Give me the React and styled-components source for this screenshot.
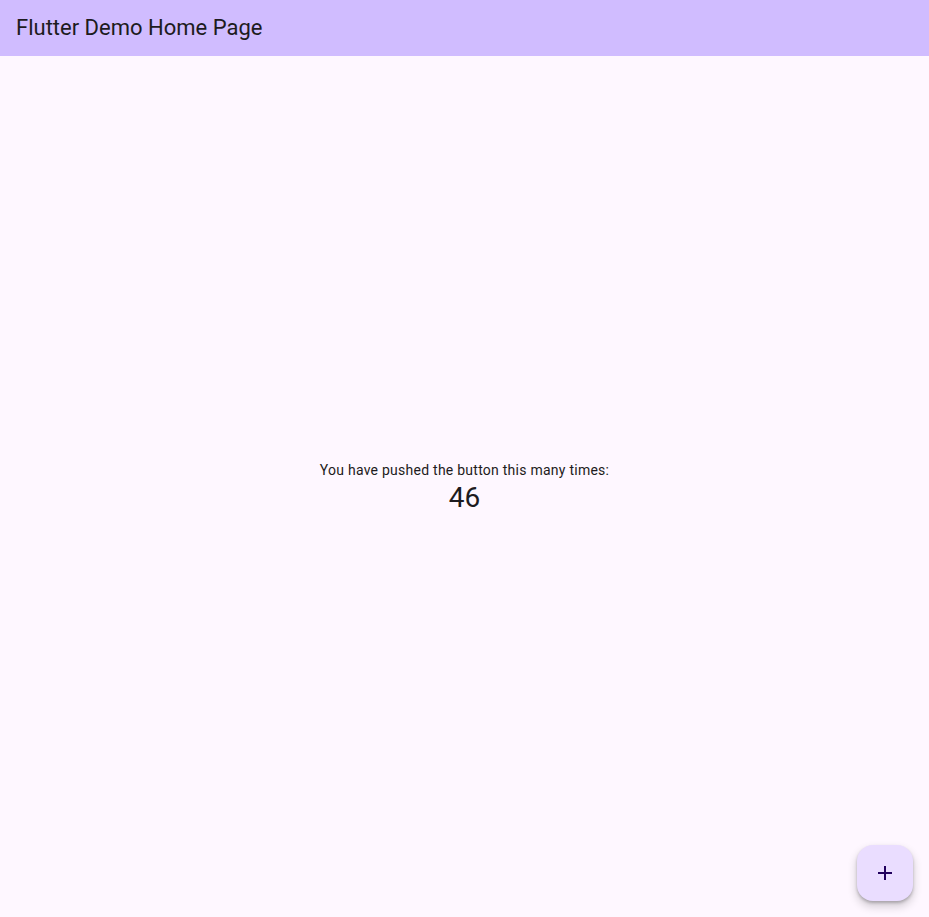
import React from "react";
import styled, { createGlobalStyle } from "styled-components";

const Global = createGlobalStyle`
  html, body { margin: 0; padding: 0; height: 100%; }
  body { background: #FEF7FF; font-family: Roboto, "Noto Sans", sans-serif; }
  #root { height: 100%; }
`;

const Page = styled.div`
  height: 100vh;
  display: flex;
  flex-direction: column;
  background: #FEF7FF;
  position: relative;
  overflow: hidden;
`;

const AppBar = styled.header`
  height: 56px;
  flex: none;
  display: flex;
  align-items: center;
  padding: 0 16px;
  background: #D0BCFF;
`;

const Title = styled.h1`
  margin: 0;
  font-family: Roboto, sans-serif;
  font-weight: 400;
  font-size: 22px;
  line-height: 28px;
  color: #1D1B20;
`;

const Body = styled.main`
  flex: 1;
  display: flex;
  flex-direction: column;
  align-items: center;
  justify-content: center;
  padding-top: 2px;
`;

const Label = styled.div`
  font-size: 14px;
  line-height: 20px;
  letter-spacing: 0.25px;
  color: #1D1B20;
`;

const Counter = styled.div`
  font-size: 28px;
  line-height: 36px;
  color: #1D1B20;
`;

const Fab = styled.button`
  position: absolute;
  right: 16px;
  bottom: 16px;
  width: 56px;
  height: 56px;
  border: none;
  border-radius: 16px;
  background: #EADDFF;
  color: #21005D;
  display: flex;
  align-items: center;
  justify-content: center;
  padding: 0;
  box-shadow: 0 5px 8px 1px rgba(0, 0, 0, 0.16), 0 2px 3px rgba(0, 0, 0, 0.22);
  cursor: pointer;
`;

export default function App() {
  return (
    <Page>
      <Global />
      <AppBar>
        <Title>Flutter Demo Home Page</Title>
      </AppBar>
      <Body>
        <Label>You have pushed the button this many times:</Label>
        <Counter>46</Counter>
      </Body>
      <Fab aria-label="Increment">
        <svg width="24" height="24" viewBox="0 0 24 24" fill="currentColor">
          <path d="M19 13h-6v6h-2v-6H5v-2h6V5h2v6h6v2z" />
        </svg>
      </Fab>
    </Page>
  );
}
